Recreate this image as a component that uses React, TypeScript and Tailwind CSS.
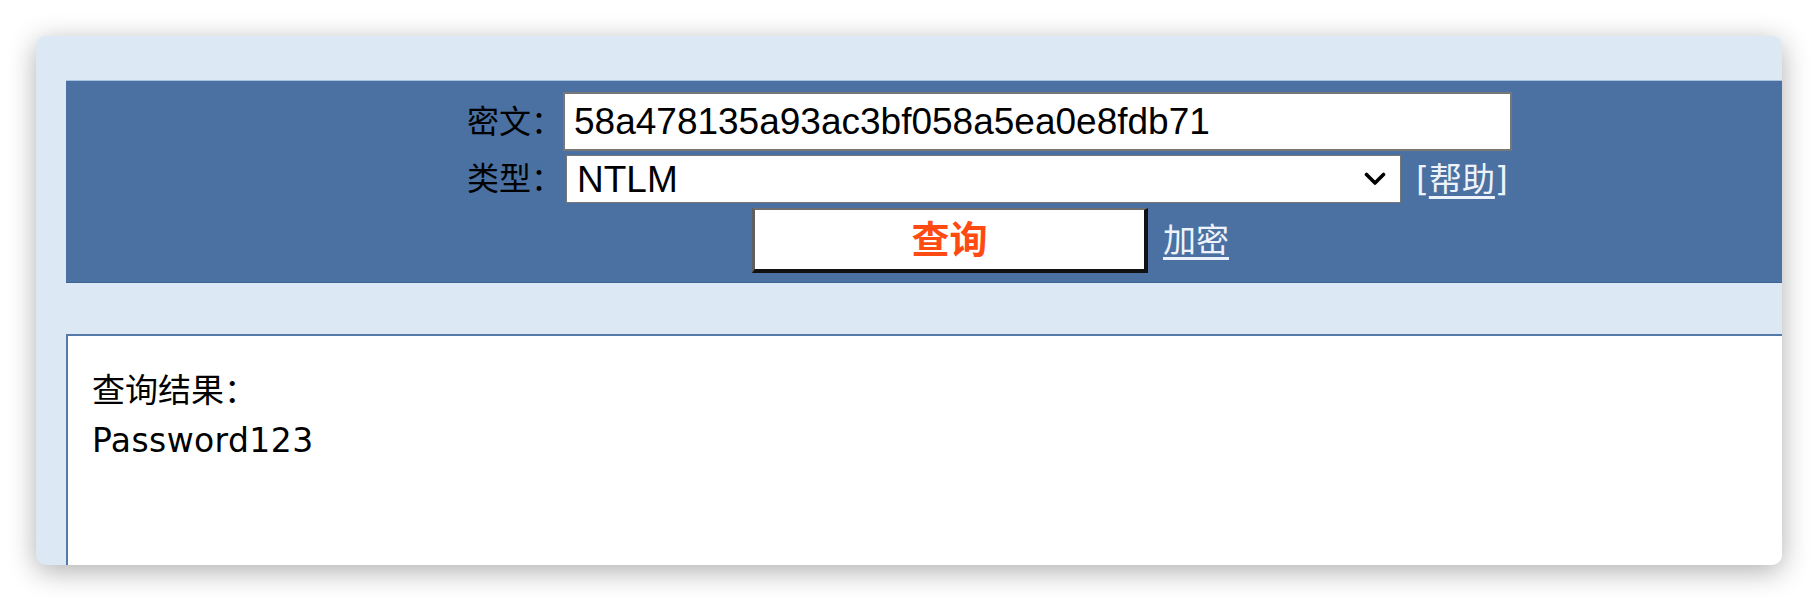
import React from "react";

const cjk = { fontFamily: '"DejaVu Sans", "Noto Sans CJK SC", sans-serif' };
const arial = { fontFamily: '"Liberation Sans", "Noto Sans CJK SC", sans-serif' };

function Chevron() {
  return (
    <svg width="22" height="14" viewBox="0 0 22 14" fill="none">
      <path d="M2.5 2.5 L11 11 L19.5 2.5" stroke="#000" strokeWidth="3.6" strokeLinecap="round" strokeLinejoin="round" />
    </svg>
  );
}

export default function App() {
  return (
    <div className="w-[1818px] h-[602px] bg-white p-[36px]">
      <div className="h-[529px] rounded-[10px] bg-[#dce9f4] overflow-hidden shadow-[0_6px_28px_rgba(0,0,0,0.32)] flex flex-col pt-[44px] pl-[30px]">
        {/* blue band */}
        <div className="h-[203px] bg-[#4a71a1] border-t border-b border-t-[#a9c3de] border-b-[#3f6592] pl-[401px] pt-[11px]">
          <div className="grid grid-cols-[96px_949px] w-[1045px] text-[32px] text-black" style={cjk}>
            <div className="h-[59px] flex items-center justify-end leading-none">密文：</div>
            <div className="h-[59px] bg-white border-2 border-[#777] flex items-center px-[9px]">
              <span className="text-[37px] leading-none text-black" style={arial}>
                58a478135a93ac3bf058a5ea0e8fdb71
              </span>
            </div>
            <div className="h-[48px] mt-[4px] flex items-center justify-end leading-none">类型：</div>
            <div className="h-[48px] mt-[4px] flex items-center gap-[15px]">
              <div className="w-[835px] h-[48px] ml-[3px] bg-white border border-[#777] flex items-center justify-between pl-[10px] pr-[14px]">
                <span className="text-[37px] leading-none" style={arial}>NTLM</span>
                <Chevron />
              </div>
              <span className="text-[33px] leading-none text-[#eef3fb]">
                [<span className="underline underline-offset-[5px]">帮助</span>]
              </span>
            </div>
            <div className="col-span-2 mt-[5px] flex items-center justify-center gap-[15px] pl-[2px]">
              <div className="w-[396px] h-[65px] bg-white border-t-2 border-l-[3px] border-r-[4px] border-b-[4px] border-t-[#6f6f6f] border-l-[#5f5f5f] border-r-[#111] border-b-[#111] flex items-center justify-center">
                <span className="text-[38px] font-bold leading-none text-[#ff4a12]">查询</span>
              </div>
              <span className="text-[33px] leading-none text-[#eef3fb] underline underline-offset-[5px]">加密</span>
            </div>
          </div>
        </div>
        {/* result box */}
        <div className="mt-[51px] flex-1 bg-white border-t-2 border-l-2 border-[#557aa8] pl-[24px] pt-[30px] text-[33px] leading-[50px] text-black" style={cjk}>
          <div>查询结果：</div>
          <div className="tracking-[0.4px]">Password123</div>
        </div>
      </div>
    </div>
  );
}
